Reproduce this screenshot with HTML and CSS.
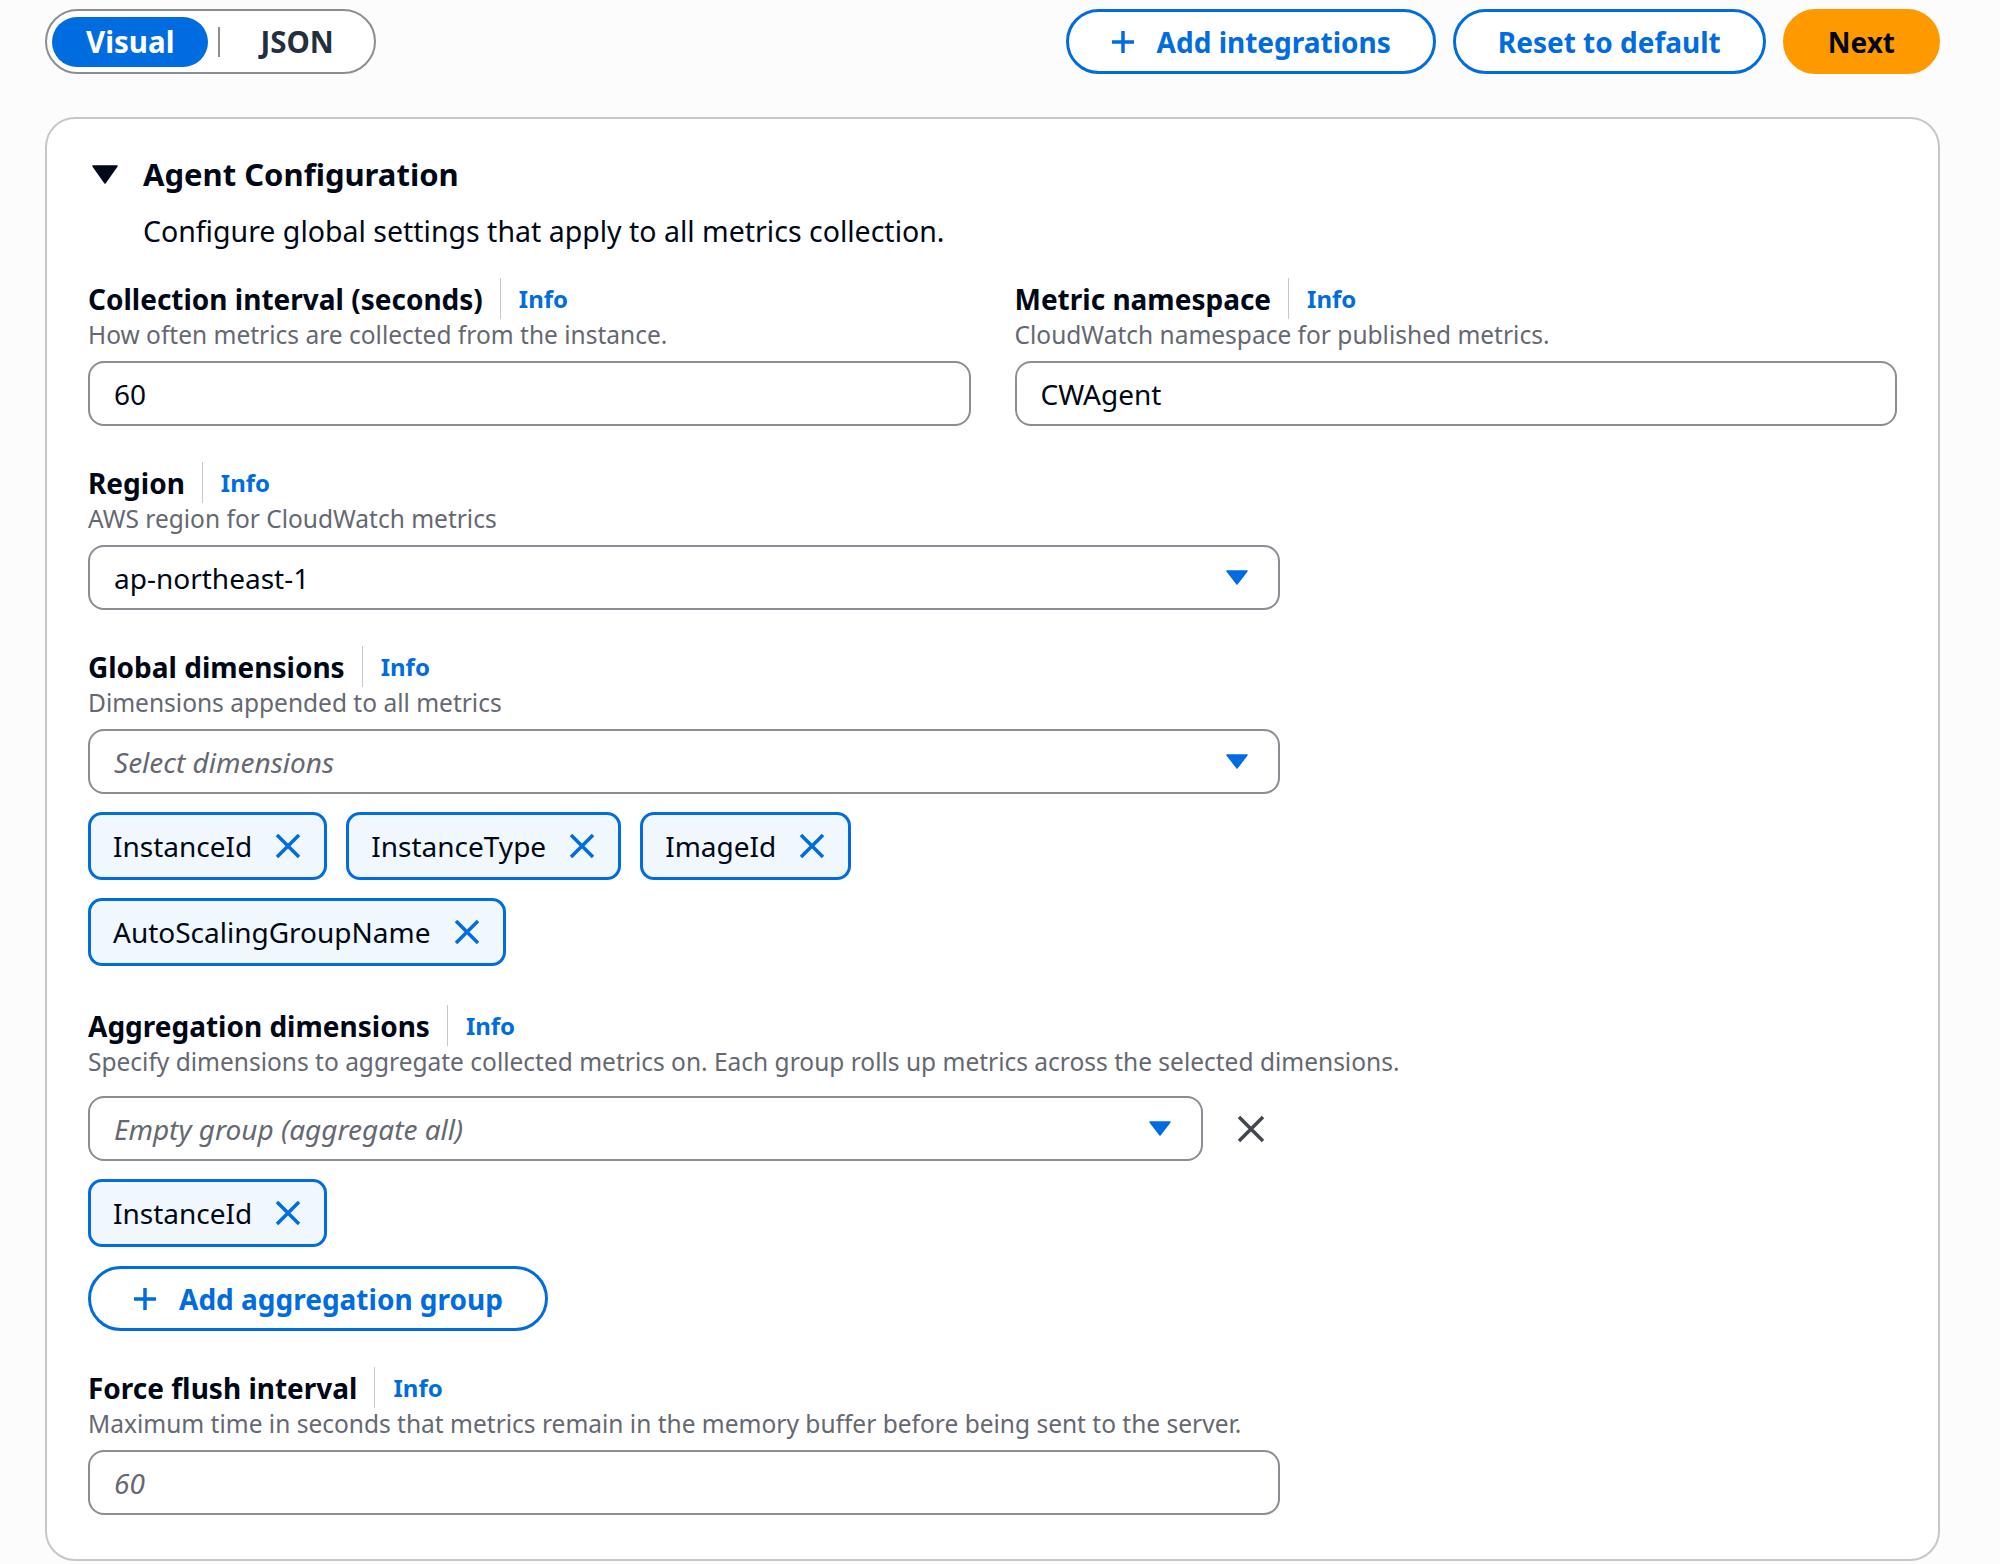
FILE: index.html
```html
<!DOCTYPE html>
<html lang="en">
<head>
  <meta charset="UTF-8" />
  <title>Agent Configuration</title>
  <meta name="viewport" content="width=device-width, initial-scale=1.0" />
  <link rel="stylesheet" href="styles.css">
</head>
<body>
  <div class="page">
    <header class="topbar">
      <div class="toggle">
        <button class="seg active">Visual</button>
        <span class="seg-divider"></span>
        <button class="seg">JSON</button>
      </div>
      <div class="actions">
        <button class="btn btn-outline">
          <svg class="plus" viewBox="0 0 24 24"><path d="M12 1v22M1 12h22" /></svg>
          Add integrations
        </button>
        <button class="btn btn-outline">Reset to default</button>
        <button class="btn btn-primary">Next</button>
      </div>
    </header>

    <section class="card">
      <div class="card-head">
        <svg class="caret" viewBox="0 0 26 19"><path d="M1 1h24L13 18z" /></svg>
        <h2>Agent Configuration</h2>
      </div>
      <p class="card-desc">Configure global settings that apply to all metrics collection.</p>

      <div class="fields">
        <div class="cols">
          <div class="field">
            <div class="label-row"><span class="label">Collection interval (seconds)</span><a class="info">Info</a></div>
            <div class="hint">How often metrics are collected from the instance.</div>
            <div class="input">60</div>
          </div>
          <div class="field">
            <div class="label-row"><span class="label">Metric namespace</span><a class="info">Info</a></div>
            <div class="hint">CloudWatch namespace for published metrics.</div>
            <div class="input">CWAgent</div>
          </div>
        </div>

        <div class="field">
          <div class="label-row"><span class="label">Region</span><a class="info">Info</a></div>
          <div class="hint">AWS region for CloudWatch metrics</div>
          <div class="input select narrow">
            <span>ap-northeast-1</span>
            <svg class="drop" viewBox="0 0 22 15"><path d="M1 1h20L11 14z" /></svg>
          </div>
        </div>

        <div class="field">
          <div class="label-row"><span class="label">Global dimensions</span><a class="info">Info</a></div>
          <div class="hint">Dimensions appended to all metrics</div>
          <div class="input select placeholder narrow">
            <span>Select dimensions</span>
            <svg class="drop" viewBox="0 0 22 15"><path d="M1 1h20L11 14z" /></svg>
          </div>
          <div class="tokens narrow">
            <span class="token">InstanceId<svg class="x" viewBox="0 0 28 28"><path d="M3 3l22 22M25 3L3 25" /></svg></span>
            <span class="token">InstanceType<svg class="x" viewBox="0 0 28 28"><path d="M3 3l22 22M25 3L3 25" /></svg></span>
            <span class="token">ImageId<svg class="x" viewBox="0 0 28 28"><path d="M3 3l22 22M25 3L3 25" /></svg></span>
            <span class="token">AutoScalingGroupName<svg class="x" viewBox="0 0 28 28"><path d="M3 3l22 22M25 3L3 25" /></svg></span>
          </div>
        </div>

        <div class="field after-tokens">
          <div class="label-row"><span class="label">Aggregation dimensions</span><a class="info">Info</a></div>
          <div class="hint">Specify dimensions to aggregate collected metrics on. Each group rolls up metrics across the selected dimensions.</div>
          <div class="group narrow">
            <div class="group-row">
              <div class="input select placeholder">
                <span>Empty group (aggregate all)</span>
                <svg class="drop" viewBox="0 0 22 15"><path d="M1 1h20L11 14z" /></svg>
              </div>
              <button class="remove"><svg viewBox="0 0 30 30"><path d="M3 3l24 24M27 3L3 27" /></svg></button>
            </div>
            <div class="tokens">
              <span class="token">InstanceId<svg class="x" viewBox="0 0 28 28"><path d="M3 3l22 22M25 3L3 25" /></svg></span>
            </div>
          </div>
          <div class="add-row">
            <button class="btn btn-outline">
              <svg class="plus" viewBox="0 0 24 24"><path d="M12 1v22M1 12h22" /></svg>
              Add aggregation group
            </button>
          </div>
        </div>

        <div class="field">
          <div class="label-row"><span class="label">Force flush interval</span><a class="info">Info</a></div>
          <div class="hint">Maximum time in seconds that metrics remain in the memory buffer before being sent to the server.</div>
          <div class="input placeholder narrow">60</div>
        </div>
      </div>
    </section>
  </div>
</body>
</html>
```

FILE: styles.css
```css
html, body {
  margin: 0;
  padding: 0;
  background: #fcfcfc;
  color: #000716;
  font-family: 'Noto Sans', 'Open Sans', sans-serif;
}

.page {
  padding: 9px 60px 0 45px;
}

.topbar {
  display: flex;
  justify-content: space-between;
  align-items: center;
  height: 65px;
}

.toggle {
  display: flex;
  align-items: center;
  height: 65px;
  box-sizing: border-box;
  border: 2px solid #8c8c94;
  border-radius: 33px;
  padding: 0 5px;
  background: white;
}

.seg {
  font-family: inherit;
  font-size: 29.5px;
  font-weight: 700;
  height: 50px;
  border: none;
  background: none;
  color: #232f3e;
  padding: 0 35px 0 30px;
  border-radius: 25px;
}

.seg.active {
  background: #006ce0;
  color: white;
  padding: 0 34px;
}

.seg-divider {
  width: 2px;
  height: 30px;
  background: #8c8c94;
  margin: 0 10px;
}

.actions {
  display: flex;
  gap: 17px;
}

.btn {
  display: inline-flex;
  align-items: center;
  gap: 22px;
  height: 65px;
  box-sizing: border-box;
  padding: 0 42px;
  border-radius: 33px;
  font-family: inherit;
  font-size: 28px;
  font-weight: 700;
  cursor: pointer;
}

.btn-outline {
  background: white;
  color: #006ce0;
  border: 3px solid #006ce0;
}

.btn-primary {
  background: #ff9900;
  color: #000716;
  border: 3px solid #ff9900;
}

.plus {
  width: 24px;
  height: 24px;
  stroke: currentColor;
  stroke-width: 3.5;
  fill: none;
}

.card {
  margin-top: 43px;
  background: white;
  border: 2px solid #c6c6cd;
  border-radius: 30px;
  padding: 33px 41px 44px;
}

.card-head {
  display: flex;
  align-items: center;
  gap: 25px;
}

.caret {
  width: 26px;
  height: 19px;
  margin-left: 4px;
  fill: #000716;
  stroke: #000716;
  stroke-width: 1.5;
  stroke-linejoin: round;
}

.card-head h2 {
  margin: 0;
  font-size: 31px;
  line-height: 44px;
  font-weight: 700;
}

.card-desc {
  margin: 17px 0 0 55px;
  font-size: 28.5px;
  line-height: 36px;
}

.fields {
  margin-top: 32px;
  display: flex;
  flex-direction: column;
  gap: 39px;
}

.cols {
  display: grid;
  grid-template-columns: 1fr 1fr;
  gap: 44px;
}

.narrow {
  max-width: 1192px;
}

.after-tokens {
  margin-top: 3px;
}

.label-row {
  display: flex;
  align-items: center;
  height: 36px;
}

.label {
  font-size: 28px;
  line-height: 36px;
  font-weight: 700;
}

.info {
  display: flex;
  align-items: center;
  height: 41px;
  margin: -3px 0 -2px 17px;
  padding-left: 18px;
  border-left: 1px solid #c6c6cd;
  color: #006ce0;
  font-size: 24px;
  font-weight: 700;
}

.hint {
  margin-top: 2px;
  font-size: 24.5px;
  line-height: 32px;
  color: #656871;
}

.input {
  margin-top: 10px;
  height: 65px;
  box-sizing: border-box;
  border: 2px solid #8c8c94;
  border-radius: 16px;
  padding: 0 30px 0 24px;
  display: flex;
  align-items: center;
  justify-content: space-between;
  font-size: 28px;
  background: white;
}

.input.placeholder {
  color: #656871;
  font-style: italic;
}

.drop {
  width: 22px;
  height: 15px;
  fill: #006ce0;
  stroke: #006ce0;
  stroke-width: 1.5;
  stroke-linejoin: round;
}

.tokens {
  display: flex;
  flex-wrap: wrap;
  gap: 18px 19px;
  margin-top: 18px;
}

.token {
  display: inline-flex;
  align-items: center;
  gap: 22px;
  height: 68px;
  box-sizing: border-box;
  padding: 0 22px 0 22px;
  border: 3px solid #006ce0;
  border-radius: 14px;
  background: #f0f8fe;
  font-size: 28px;
}

.x {
  width: 28px;
  height: 28px;
  stroke: #006ce0;
  stroke-width: 3.5;
  fill: none;
}

.group {
  margin-top: 8px;
}

.group-row {
  display: flex;
  align-items: center;
}

.group-row .input {
  flex: 1;
}

.remove {
  width: 77px;
  height: 65px;
  margin-top: 10px;
  border: none;
  background: none;
  display: flex;
  align-items: center;
  justify-content: center;
  padding: 0 0 0 18px;
}

.remove svg {
  width: 30px;
  height: 30px;
  stroke: #424650;
  stroke-width: 3.5;
  fill: none;
}

.add-row {
  margin-top: 19px;
}
```
